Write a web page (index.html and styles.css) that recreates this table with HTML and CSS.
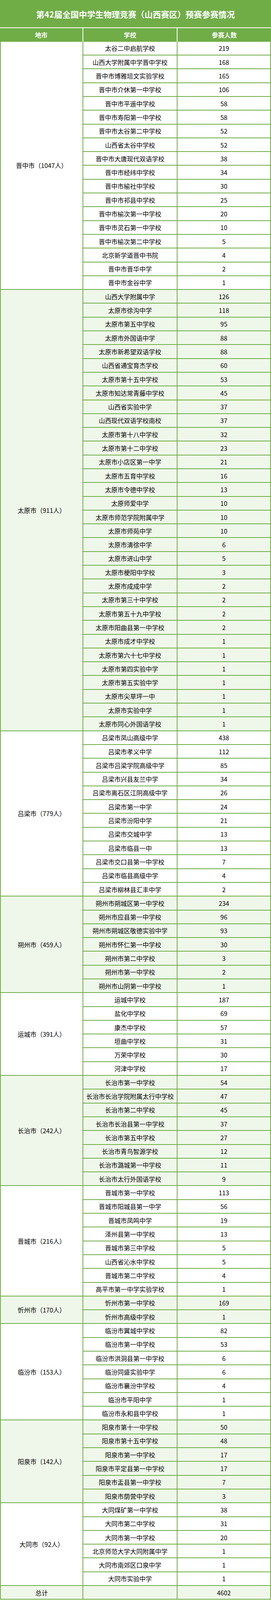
FILE: index.html
```html
<!DOCTYPE html>
<html lang="zh-CN">
<head>
<meta charset="utf-8">
<title>第42届全国中学生物理竞赛（山西赛区）预赛参赛情况</title>
<link rel="stylesheet" href="styles.css">
</head>
<body>
<div class="sheet">
  <div class="title">第42届全国中学生物理竞赛（山西赛区）预赛参赛情况</div>
  <div class="head">
    <div class="hc">地市</div>
    <div class="hc">学校</div>
    <div class="hc">参赛人数</div>
  </div>
  <div class="body">

    <div class="group">
      <div class="city">晋中市（1047人）</div>
      <div class="rows">
        <div class="cell">太谷二中启航学校</div><div class="cell">219</div>
        <div class="cell">山西大学附属中学晋中学校</div><div class="cell">168</div>
        <div class="cell">晋中市博雅培文实验学校</div><div class="cell">165</div>
        <div class="cell">晋中市介休第一中学校</div><div class="cell">106</div>
        <div class="cell">晋中市平遥中学校</div><div class="cell">58</div>
        <div class="cell">晋中市寿阳第一中学校</div><div class="cell">58</div>
        <div class="cell">晋中市太谷第二中学校</div><div class="cell">52</div>
        <div class="cell">山西省太谷中学校</div><div class="cell">52</div>
        <div class="cell">晋中市大唐现代双语学校</div><div class="cell">38</div>
        <div class="cell">晋中市经纬中学校</div><div class="cell">34</div>
        <div class="cell">晋中市榆社中学校</div><div class="cell">30</div>
        <div class="cell">晋中市祁县中学校</div><div class="cell">25</div>
        <div class="cell">晋中市榆次第一中学校</div><div class="cell">20</div>
        <div class="cell">晋中市灵石第一中学校</div><div class="cell">10</div>
        <div class="cell">晋中市榆次第二中学校</div><div class="cell">5</div>
        <div class="cell">北京新学道晋中书院</div><div class="cell">4</div>
        <div class="cell">晋中市晋华中学</div><div class="cell">2</div>
        <div class="cell">晋中市金谷中学</div><div class="cell">1</div>
      </div>
    </div>

    <div class="group alt">
      <div class="city">太原市（911人）</div>
      <div class="rows">
        <div class="cell">山西大学附属中学</div><div class="cell">126</div>
        <div class="cell">太原市徐沟中学</div><div class="cell">118</div>
        <div class="cell">太原市第五中学校</div><div class="cell">95</div>
        <div class="cell">太原市外国语中学</div><div class="cell">88</div>
        <div class="cell">太原市新希望双语学校</div><div class="cell">88</div>
        <div class="cell">山西省通宝育杰学校</div><div class="cell">60</div>
        <div class="cell">太原市第十五中学校</div><div class="cell">53</div>
        <div class="cell">太原市知达常青藤中学校</div><div class="cell">45</div>
        <div class="cell">山西省实验中学</div><div class="cell">37</div>
        <div class="cell">山西现代双语学校南校</div><div class="cell">37</div>
        <div class="cell">太原市第十八中学校</div><div class="cell">32</div>
        <div class="cell">太原市第十二中学校</div><div class="cell">23</div>
        <div class="cell">太原市小店区第一中学</div><div class="cell">21</div>
        <div class="cell">太原市五育中学校</div><div class="cell">16</div>
        <div class="cell">太原市令德中学校</div><div class="cell">13</div>
        <div class="cell">太原师爱中学</div><div class="cell">10</div>
        <div class="cell">太原市师范学院附属中学</div><div class="cell">10</div>
        <div class="cell">太原市师苑中学</div><div class="cell">10</div>
        <div class="cell">太原市清徐中学</div><div class="cell">6</div>
        <div class="cell">太原市进山中学</div><div class="cell">5</div>
        <div class="cell">太原市梗阳中学校</div><div class="cell">3</div>
        <div class="cell">太原市成成中学</div><div class="cell">2</div>
        <div class="cell">太原市第三十中学校</div><div class="cell">2</div>
        <div class="cell">太原市第五十九中学校</div><div class="cell">2</div>
        <div class="cell">太原市阳曲县第一中学校</div><div class="cell">2</div>
        <div class="cell">太原市成才中学校</div><div class="cell">1</div>
        <div class="cell">太原市第六十七中学校</div><div class="cell">1</div>
        <div class="cell">太原市第四实验中学</div><div class="cell">1</div>
        <div class="cell">太原市第五实验中学</div><div class="cell">1</div>
        <div class="cell">太原市尖草坪一中</div><div class="cell">1</div>
        <div class="cell">太原市实验中学</div><div class="cell">1</div>
        <div class="cell">太原市同心外国语学校</div><div class="cell">1</div>
      </div>
    </div>

    <div class="group">
      <div class="city">吕梁市（779人）</div>
      <div class="rows">
        <div class="cell">吕梁市凤山高级中学</div><div class="cell">438</div>
        <div class="cell">吕梁市孝义中学</div><div class="cell">112</div>
        <div class="cell">吕梁市吕梁学院高级中学</div><div class="cell">85</div>
        <div class="cell">吕梁市兴县友兰中学</div><div class="cell">34</div>
        <div class="cell">吕梁市离石区江阴高级中学</div><div class="cell">26</div>
        <div class="cell">吕梁市第一中学</div><div class="cell">24</div>
        <div class="cell">吕梁市汾阳中学</div><div class="cell">21</div>
        <div class="cell">吕梁市交城中学</div><div class="cell">13</div>
        <div class="cell">吕梁市临县一中</div><div class="cell">13</div>
        <div class="cell">吕梁市交口县第一中学校</div><div class="cell">7</div>
        <div class="cell">吕梁市临县高级中学</div><div class="cell">4</div>
        <div class="cell">吕梁市柳林县汇丰中学</div><div class="cell">2</div>
      </div>
    </div>

    <div class="group alt">
      <div class="city">朔州市（459人）</div>
      <div class="rows">
        <div class="cell">朔州市朔城区第一中学校</div><div class="cell">234</div>
        <div class="cell">朔州市应县第一中学校</div><div class="cell">96</div>
        <div class="cell">朔州市朔城区敬德实验中学</div><div class="cell">93</div>
        <div class="cell">朔州市怀仁第一中学校</div><div class="cell">30</div>
        <div class="cell">朔州市第二中学校</div><div class="cell">3</div>
        <div class="cell">朔州市第一中学校</div><div class="cell">2</div>
        <div class="cell">朔州市山阴第一中学校</div><div class="cell">1</div>
      </div>
    </div>

    <div class="group">
      <div class="city">运城市（391人）</div>
      <div class="rows">
        <div class="cell">运城中学校</div><div class="cell">187</div>
        <div class="cell">盐化中学校</div><div class="cell">69</div>
        <div class="cell">康杰中学校</div><div class="cell">57</div>
        <div class="cell">垣曲中学校</div><div class="cell">31</div>
        <div class="cell">万荣中学校</div><div class="cell">30</div>
        <div class="cell">河津中学校</div><div class="cell">17</div>
      </div>
    </div>

    <div class="group alt">
      <div class="city">长治市（242人）</div>
      <div class="rows">
        <div class="cell">长治市第一中学校</div><div class="cell">54</div>
        <div class="cell">长治市长治学院附属太行中学校</div><div class="cell">47</div>
        <div class="cell">长治市第二中学校</div><div class="cell">45</div>
        <div class="cell">长治市长治县第一中学校</div><div class="cell">37</div>
        <div class="cell">长治市第五中学校</div><div class="cell">27</div>
        <div class="cell">长治市青鸟智源学校</div><div class="cell">12</div>
        <div class="cell">长治市潞城第一中学校</div><div class="cell">11</div>
        <div class="cell">长治市太行外国语学校</div><div class="cell">9</div>
      </div>
    </div>

    <div class="group">
      <div class="city">晋城市（216人）</div>
      <div class="rows">
        <div class="cell">晋城市第一中学校</div><div class="cell">113</div>
        <div class="cell">晋城市阳城县第一中学</div><div class="cell">56</div>
        <div class="cell">晋城市凤鸣中学</div><div class="cell">19</div>
        <div class="cell">泽州县第一中学校</div><div class="cell">13</div>
        <div class="cell">晋城市第三中学校</div><div class="cell">5</div>
        <div class="cell">山西省沁水中学校</div><div class="cell">5</div>
        <div class="cell">晋城市第二中学校</div><div class="cell">4</div>
        <div class="cell">高平市第一中学实验学校</div><div class="cell">1</div>
      </div>
    </div>

    <div class="group alt">
      <div class="city">忻州市（170人）</div>
      <div class="rows">
        <div class="cell">忻州市第一中学校</div><div class="cell">169</div>
        <div class="cell">忻州市高级中学校</div><div class="cell">1</div>
      </div>
    </div>

    <div class="group">
      <div class="city">临汾市（153人）</div>
      <div class="rows">
        <div class="cell">临汾市翼城中学校</div><div class="cell">82</div>
        <div class="cell">临汾市第一中学校</div><div class="cell">53</div>
        <div class="cell">临汾市洪洞县第一中学校</div><div class="cell">6</div>
        <div class="cell">临汾同盛实验中学</div><div class="cell">6</div>
        <div class="cell">临汾市襄汾中学校</div><div class="cell">4</div>
        <div class="cell">临汾市平阳中学</div><div class="cell">1</div>
        <div class="cell">临汾市永和县中学校</div><div class="cell">1</div>
      </div>
    </div>

    <div class="group alt">
      <div class="city">阳泉市（142人）</div>
      <div class="rows">
        <div class="cell">阳泉市第十一中学校</div><div class="cell">50</div>
        <div class="cell">阳泉市第十五中学校</div><div class="cell">48</div>
        <div class="cell">阳泉市第一中学校</div><div class="cell">17</div>
        <div class="cell">阳泉市平定县第一中学校</div><div class="cell">17</div>
        <div class="cell">阳泉市盂县第一中学校</div><div class="cell">7</div>
        <div class="cell">阳泉市荫营中学校</div><div class="cell">3</div>
      </div>
    </div>

    <div class="group">
      <div class="city">大同市（92人）</div>
      <div class="rows">
        <div class="cell">大同煤矿第一中学校</div><div class="cell">38</div>
        <div class="cell">大同市第二中学校</div><div class="cell">31</div>
        <div class="cell">大同市第一中学校</div><div class="cell">20</div>
        <div class="cell">北京师范大学大同附属中学</div><div class="cell">1</div>
        <div class="cell">大同市南郊区口泉中学</div><div class="cell">1</div>
        <div class="cell">大同市实验中学</div><div class="cell">1</div>
      </div>
    </div>

    <div class="group alt">
      <div class="city">总计</div>
      <div class="rows">
        <div class="cell"></div><div class="cell">4602</div>
      </div>
    </div>

  </div>
</div>
</body>
</html>
```

FILE: styles.css
```css
html, body {
  margin: 0;
  padding: 0;
  background: #ffffff;
}

body {
  font-family: "Noto Sans CJK SC", "Noto Sans", "Liberation Sans", sans-serif;
  color: #000000;
}

.sheet {
  width: 693px;
}

.title {
  height: 66px;
  padding-top: 3.5px;
  background: #70ad47;
  border-bottom: 2px solid #ffffff;
  color: #ffffff;
  font-size: 21px;
  font-weight: 700;
  line-height: 1;
  display: flex;
  align-items: center;
  justify-content: center;
}

.head {
  display: grid;
  grid-template-columns: 211px 241px 241px;
  height: 35.3px;
  background: #70ad47;
}

.hc {
  display: flex;
  align-items: center;
  justify-content: center;
  color: #ffffff;
  font-size: 16px;
  font-weight: 700;
  line-height: 1;
}

.hc + .hc {
  border-left: 2px solid #ffffff;
}

.body {
  display: flex;
  flex-direction: column;
  gap: 2px;
  background: #70ad47;
  padding: 0 2px 2px 2px;
}

.group {
  display: flex;
  gap: 2px;
}

.city {
  width: 209px;
  flex: none;
  background: #ffffff;
  display: flex;
  align-items: center;
  justify-content: center;
  font-size: 16px;
  line-height: 1;
}

.rows {
  display: grid;
  grid-template-columns: 239px 237px;
  grid-auto-rows: 33.3px;
  gap: 2px;
}

.cell {
  background: #ffffff;
  display: flex;
  align-items: center;
  justify-content: center;
  font-size: 16px;
  line-height: 1;
  white-space: nowrap;
}

.group.alt .city,
.group.alt .cell {
  background: #eff7ea;
}
```
